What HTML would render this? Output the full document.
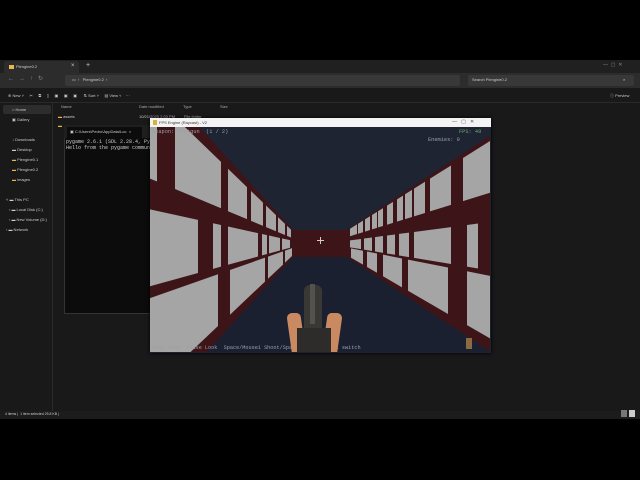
<!DOCTYPE html>
<html><head><meta charset="utf-8"><style>
*{margin:0;padding:0;box-sizing:border-box}
body{width:640px;height:480px;background:#000;position:relative;overflow:hidden;font-family:"Liberation Sans",sans-serif;color:#ddd}
.a{position:absolute}
.t{font-size:4px;white-space:nowrap;color:#ccc}
.m{font-family:"Liberation Mono",monospace;white-space:nowrap}
</style></head><body>
<!-- explorer -->
<div class="a" style="left:0;top:60px;width:640px;height:359px;background:#191919"></div>
<div class="a" style="left:0;top:60px;width:640px;height:13px;background:#202020"></div>
<div class="a" style="left:4px;top:61px;width:75px;height:12px;background:#2c2c2c;border-radius:3px 3px 0 0"></div>
<div class="a" style="left:9px;top:65px;width:5px;height:4px;background:#e8b64a"></div>
<div class="a t" style="left:16px;top:64px">Plengine0.2</div>
<div class="a t" style="left:71px;top:63px;font-size:6px">×</div>
<div class="a t" style="left:86px;top:62px;font-size:7px">+</div>
<div class="a t" style="left:603px;top:62px;font-size:5px;color:#888">—&nbsp;&nbsp;▢&nbsp;&nbsp;✕</div>
<div class="a" style="left:0;top:73px;width:640px;height:15px;background:#2c2c2c"></div>
<div class="a t" style="left:8px;top:75px;font-size:6px;color:#888">←&nbsp;&nbsp;&nbsp;→&nbsp;&nbsp;&nbsp;↑&nbsp;&nbsp;&nbsp;↻</div>
<div class="a" style="left:65px;top:75px;width:395px;height:11px;background:#383838;border-radius:2px"></div>
<div class="a t" style="left:72px;top:77px">▭&nbsp;&nbsp;›&nbsp;&nbsp;&nbsp;Plengine0.2&nbsp;&nbsp;›</div>
<div class="a" style="left:468px;top:75px;width:166px;height:11px;background:#383838;border-radius:2px"></div>
<div class="a t" style="left:472px;top:77px">Search Plengine0.2</div>
<div class="a t" style="left:623px;top:77px">⌕</div>
<div class="a t" style="left:8px;top:93px">⊕ New ˅&nbsp;&nbsp;&nbsp;&nbsp;&nbsp;✂&nbsp;&nbsp;&nbsp;&nbsp;&nbsp;⧉&nbsp;&nbsp;&nbsp;&nbsp;&nbsp;▯&nbsp;&nbsp;&nbsp;&nbsp;&nbsp;▣&nbsp;&nbsp;&nbsp;&nbsp;&nbsp;▣&nbsp;&nbsp;&nbsp;&nbsp;&nbsp;▣&nbsp;&nbsp;&nbsp;&nbsp;&nbsp;&nbsp;⇅ Sort ˅&nbsp;&nbsp;&nbsp;&nbsp;&nbsp;▤ View ˅&nbsp;&nbsp;&nbsp;&nbsp;···</div>
<div class="a t" style="left:610px;top:93px">ⓘ Preview</div>
<div class="a" style="left:0;top:102px;width:640px;height:1px;background:#2a2a2a"></div>
<div class="a" style="left:52px;top:103px;width:1px;height:308px;background:#2a2a2a"></div>
<div class="a" style="left:3px;top:105px;width:48px;height:9px;background:#2d2d2d;border-radius:2px"></div>
<div class="a t" style="left:12px;top:107px">⌂ Home</div>
<div class="a t" style="left:12px;top:117px">▣ Gallery</div>
<div class="a t" style="left:12px;top:137px">↓ Downloads</div>
<div class="a t" style="left:12px;top:147px">▬ Desktop</div>
<div class="a t" style="left:12px;top:157px"><span style="color:#e8b64a">▬</span> Plengine0.1</div>
<div class="a t" style="left:12px;top:167px"><span style="color:#e8b64a">▬</span> Plengine0.2</div>
<div class="a t" style="left:12px;top:177px"><span style="color:#e8b64a">▬</span> images</div>
<div class="a t" style="left:6px;top:197px">˅ ▬ This PC</div>
<div class="a t" style="left:9px;top:207px">› ▬ Local Disk (C:)</div>
<div class="a t" style="left:9px;top:217px">› ▬ New Volume (D:)</div>
<div class="a t" style="left:6px;top:227px">› ▬ Network</div>
<div class="a t" style="left:61px;top:104px;color:#aaa">Name</div>
<div class="a t" style="left:139px;top:104px;color:#aaa">Date modified</div>
<div class="a t" style="left:183px;top:104px;color:#aaa">Type</div>
<div class="a t" style="left:220px;top:104px;color:#aaa">Size</div>
<div class="a t" style="left:58px;top:114px"><span style="color:#e8b64a">▬</span> assets</div>
<div class="a t" style="left:139px;top:114px">10/21/2025 2:00 PM</div>
<div class="a t" style="left:184px;top:114px">File folder</div>
<div class="a t" style="left:58px;top:123px;color:#e8b64a">▬</div>
<div class="a" style="left:0;top:411px;width:640px;height:8px;background:#1c1c1c"></div>
<div class="a t" style="left:5px;top:412px;font-size:3.5px">4 items&nbsp;|&nbsp;&nbsp;1 item selected 25.8 KB&nbsp;|</div>
<div class="a" style="left:621px;top:410px;width:6px;height:7px;background:#777"></div>
<div class="a" style="left:629px;top:410px;width:6px;height:7px;background:#ccc"></div>
<!-- terminal -->
<div class="a" style="left:64px;top:125px;width:90px;height:189px;background:#0c0c0c;border:1px solid #333"></div>
<div class="a" style="left:64px;top:125px;width:90px;height:13px;background:#1f1f1f"></div>
<div class="a" style="left:67px;top:127px;width:75px;height:11px;background:#0c0c0c"></div>
<div class="a t" style="left:70px;top:129px;font-size:4px">▣ C:\Users\Pedro\AppData\Loc&nbsp;&nbsp;×</div>
<div class="a m" style="left:66px;top:139px;font-size:5px;color:#ccc;line-height:6px">pygame 2.6.1 (SDL 2.28.4, Py<br>Hello from the pygame commun</div>
<!-- game window -->
<div class="a" style="left:150px;top:118px;width:341px;height:235px;background:#1d2231;box-shadow:0 0 4px #000"></div>
<div class="a" style="left:150px;top:118px;width:341px;height:9px;background:#f3f3f3"></div>
<div class="a" style="left:153px;top:120px;width:4px;height:5px;background:#d9b23a"></div>
<div class="a t" style="left:159px;top:120px;font-size:4px;color:#333">FPS Engine (Raycast) - V2</div>
<div class="a t" style="left:452px;top:119px;font-size:5px;color:#555">—&nbsp;&nbsp;&nbsp;▢&nbsp;&nbsp;&nbsp;✕</div>
<svg class="a" style="left:150px;top:127px" width="340" height="225" viewBox="150 127 340 225" id="g">
<rect x="150" y="127" width="340" height="225" fill="#1e2432"/>
<rect x="150" y="244" width="340" height="108" fill="#1b2030"/>
</svg>
<div class="a m" style="left:152px;top:129px;font-size:5.3px;color:#9aa0a8">Weapon: Shotgun&nbsp;&nbsp;(1 / 2)</div>
<div class="a m" style="left:459px;top:129px;font-size:5.3px;color:#6fa86f">FPS: 49</div>
<div class="a m" style="left:428px;top:137px;font-size:5.3px;color:#9aa0a8">Enemies: 0</div>
<div class="a m" style="left:152px;top:345px;font-size:5.2px;color:#9aa0a8">WASD Move&nbsp;&nbsp;Mouse Look&nbsp;&nbsp;Space/Mouse1 Shoot/Spawn&nbsp;&nbsp;Mouse wheel switch</div>
<script>
var s=document.getElementById('g'),ns='http://www.w3.org/2000/svg',c=243.5,W='#3d1518',G='#a5a5a5';
function P(pts,f){var p=document.createElementNS(ns,'polygon');p.setAttribute('points',pts.map(function(a){return a[0]+','+a[1]}).join(' '));p.setAttribute('fill',f);s.appendChild(p);}
function hl(d){return 13.5+1.1*d;}
function hr(d){return 13.5+0.66*d;}
P([[150,c-hl(143)],[293,c-hl(0)],[293,c+hl(0)],[150,c+hl(143)]],W);
P([[490,c-hr(143)],[347,c-hr(0)],[347,c+hr(0)],[490,c+hr(143)]],W);
P([[293,230],[347,230],[347,257],[293,257]],W);
var rows=[[-0.88,-0.38],[-0.2,0.25],[0.32,0.86]];
var L=[
 [[143,136],[118,72],[65,46],[42,30],[27,17],[15,8],[6,2]],
 [[143,95],[80,72],[65,35],[31,26],[24,13],[11,3]],
 [[143,75],[63,28],[25,10],[8,1]]];
var R=[
 [[143,116],[104,83],[78,67],[65,58],[56,50],[46,40],[36,31],[30,25],[23,18],[16,11],[10,3]],
 [[131,120],[104,67],[62,52],[48,40],[36,28],[25,17],[14,3]],
 [[143,120],[101,61],[55,36],[30,20],[16,4]]];
var rr=[[-0.95,-0.47],[-0.2,0.25],[0.3,0.88]];
L.forEach(function(row,i){var r=rows[i];row.forEach(function(cl){
 var d1=cl[0],d2=cl[1],x1=293-d1,x2=293-d2;
 P([[x1,c+r[0]*hl(d1)],[x2,c+r[0]*hl(d2)],[x2,c+r[1]*hl(d2)],[x1,c+r[1]*hl(d1)]],G);});});
R.forEach(function(row,i){var r=rr[i];row.forEach(function(cl){
 var d1=cl[0],d2=cl[1],x1=347+d1,x2=347+d2;
 P([[x1,c+r[0]*hr(d1)],[x2,c+r[0]*hr(d2)],[x2,c+r[1]*hr(d2)],[x1,c+r[1]*hr(d1)]],G);});});
</script>
<!-- crosshair -->
<div class="a" style="left:317px;top:240px;width:7px;height:1px;background:#ccc"></div>
<div class="a" style="left:320px;top:237px;width:1px;height:7px;background:#ccc"></div>
<!-- weapon -->
<div class="a" style="left:289px;top:313px;width:14px;height:39px;background:#c98a62;border-radius:6px 4px 0 0;transform:skewX(8deg)"></div>
<div class="a" style="left:325px;top:313px;width:15px;height:39px;background:#c98a62;border-radius:4px 6px 0 0;transform:skewX(-8deg)"></div>
<div class="a" style="left:304px;top:285px;width:18px;height:67px;background:#3a3835;border-radius:6px 6px 0 0"></div>
<div class="a" style="left:310px;top:284px;width:5px;height:40px;background:#55524d"></div>
<div class="a" style="left:297px;top:328px;width:34px;height:24px;background:#2e2c2a"></div>
<div class="a" style="left:466px;top:338px;width:6px;height:11px;background:#8a6a40"></div>
</body></html>
